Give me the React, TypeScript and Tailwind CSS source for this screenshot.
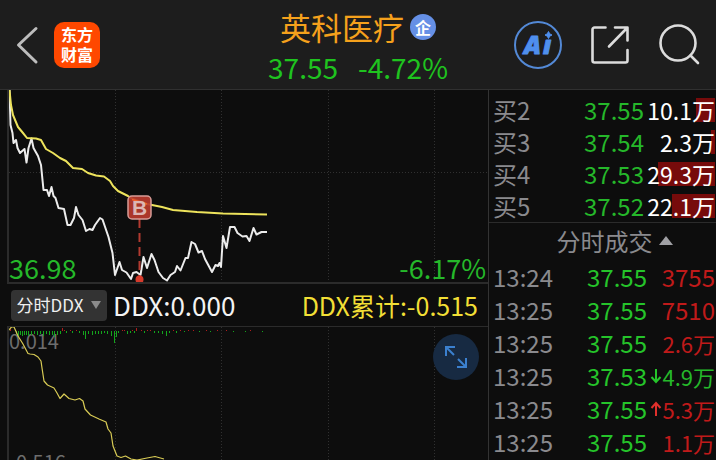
import React from "react";

interface Bid {
  label: string;
  price: string;
  volume: string;
  depth: number;
}

interface Trade {
  time: string;
  price: string;
  volume: string;
  side: "buy" | "sell";
  arrow?: "up" | "down";
}

const BIDS: Bid[] = [
  { label: "买2", price: "37.55", volume: "10.1万", depth: 19 },
  { label: "买3", price: "37.54", volume: "2.3万", depth: 4 },
  { label: "买4", price: "37.53", volume: "29.3万", depth: 57 },
  { label: "买5", price: "37.52", volume: "22.1万", depth: 43 },
];

const TRADES: Trade[] = [
  { time: "13:24", price: "37.55", volume: "3755", side: "buy" },
  { time: "13:25", price: "37.55", volume: "7510", side: "buy" },
  { time: "13:25", price: "37.55", volume: "2.6万", side: "buy" },
  { time: "13:25", price: "37.53", volume: "4.9万", side: "sell", arrow: "down" },
  { time: "13:25", price: "37.55", volume: "5.3万", side: "buy", arrow: "up" },
  { time: "13:25", price: "37.55", volume: "1.1万", side: "buy" },
];

const PRICE_LINE =
  "9.5,90 10.5,125 12.5,133 13.5,143 16,140 17.5,148 20,153 24.5,149 26.5,162.5 28.5,148 31.5,138.5 33.5,148 38,156 41,165 43.5,190 47,190 49,196 51.5,187 53.5,196 55.5,198 58.5,208 64,209 67.5,225 70.5,225 74,218 76,207 78.5,215 82.5,220 86,231 89.5,229 92.5,230 95,225 100,218 102.5,219.5 108.5,237 112.5,253 115,275 119.5,262 122,270 126.5,272.5 131,279 133,273 136.5,272 140.5,275 143.5,257 147,268 151.5,254 154.5,260 158.5,272 163,278 167,280.5 170.5,275 175,272 177,266 180.5,270.5 185.5,258 188,258 191.5,242 195,244 198.5,252.5 202,251 205,259 212,272 215.5,265 218,266 219.5,263 221,267 223,236 226.5,248 230,227 234.5,227 237.5,233 242.5,236.5 246.5,236 249.5,241 253.5,228 256.5,234.5 261.5,232 267,232";

const AVERAGE_LINE =
  "9.5,90 11,105 13,115 18,127 23,133 27,138 36,138.5 41,140 46,149 53,153 60,158 66,161 73,168 82,169 88,173 96,175.5 104,176.5 110,181 113,186 118,191 128,196 133,199 147,204 162,207 173,210 197,212 223,213.5 267,214.5";

const DDX_LINE =
  "8,331 11.5,327 14,327 18,336 23,344 28,353.5 30,354 34,354.5 38,357 41,361 42,368 44,381 47.5,385 54,388 57,393 60,398.5 64,394 69,398.5 75,400 79.5,398.5 83,401 85,409 90.5,415 99,419 106,422 108,429 111,433 113,446 117,456 121,457.5 125.5,456 131,459 137,460 147,458 155,456.5 164,459";

// [x, length] of each tick hanging below the zero axis
const DDX_DOWN = [
  [16, 3], [18, 5], [20, 4], [22, 5], [24, 4], [26, 4], [28, 5], [31, 4], [34, 3],
  [37, 4], [40, 3], [43, 5], [46, 3], [49, 4], [52, 4], [54, 6], [57, 4], [60, 3],
  [66, 2], [72, 2], [79, 2], [83, 4], [85, 8], [88, 3], [92, 4], [95, 3], [98, 3],
  [101, 3], [104, 2], [107, 3], [111, 5], [114, 12], [116, 6], [118, 2], [127, 3],
  [130, 2], [134, 2], [144, 2], [154, 2], [158, 2], [162, 3], [166, 5], [169, 2],
  [176, 2], [184, 1], [199, 1], [210, 1], [233, 1], [245, 1], [262, 1],
];

const DDX_UP = [
  [10, 2], [62, 3], [64, 1], [70, 1], [76, 1], [122, 1], [124, 1], [132, 1],
  [136, 3], [141, 1], [147, 1], [150, 1], [173, 1], [180, 1], [188, 1], [193, 1],
  [206, 1], [217, 1], [226, 1], [250, 1],
];

const GRID_X = [115, 221, 328, 434];

function Header() {
  return (
    <header className="grid h-[90px] shrink-0 grid-cols-[1fr_auto_1fr] items-center border-b border-[#303030] bg-[#1d1d1d]">
      <div className="flex items-center gap-3 pl-3">
        <button type="button" aria-label="返回">
          <svg width="30" height="40" viewBox="0 0 30 40" fill="none" stroke="#bdbdbd" strokeWidth="3" strokeLinecap="round" strokeLinejoin="round">
            <path d="M24 3.5 6.5 20 24 37" />
          </svg>
        </button>
        <a
          href="#home"
          className="flex size-[46px] flex-col items-center justify-center rounded-[10px] bg-[#ff4800] pb-px text-base leading-5 font-bold text-white"
        >
          <span>东方</span>
          <span>财富</span>
        </a>
      </div>

      <div className="flex flex-col items-center pt-1">
        <h1 className="flex items-center gap-1.5 text-[31px] leading-10 font-normal text-[#f5a11c]">
          英科医疗
          <span className="flex size-[26px] items-center justify-center rounded-full bg-[#6590e6] text-base leading-none font-bold text-white">
            企
          </span>
        </h1>
        <p className="flex gap-5 text-[28px] leading-10 text-[#1fc31f]">
          <span>37.55</span>
          <span>-4.72%</span>
        </p>
      </div>

      <div className="flex items-center justify-end gap-7 pr-4">
        <button type="button" aria-label="Ai">
          <svg width="48" height="48" viewBox="0 0 48 48" fill="#4f8fee">
            <circle cx="24" cy="24" r="23" fill="none" stroke="#5389d6" strokeWidth="2" />
            <text
              x="10 29"
              y="33"
              fontSize="25"
              fontWeight="800"
              fontStyle="italic"
              fontFamily="'Open Sans', sans-serif"
              stroke="#4f8fee"
              strokeLinejoin="round"
            >
              Aı
            </text>
            <path d="M34.500 10.500q.8 3 3.500 3.500-2.700.5-3.500 3.500-.8-3-3.500-3.500 2.700-.5 3.500-3.500Z" stroke="#4f8fee" />
          </svg>
        </button>
        <button type="button" aria-label="分享">
          <svg width="40" height="40" viewBox="0 0 40 40" fill="none" stroke="#dcdcdc" strokeWidth="2.6" strokeLinecap="round" strokeLinejoin="round">
            <path d="M15.500 2.500H4.500a2 2 0 0 0-2 2v31a2 2 0 0 0 2 2h31a2 2 0 0 0 2-2V25" />
            <path d="M25 2.500h12.500v13M37 3 19 21.500" />
          </svg>
        </button>
        <button type="button" aria-label="搜索">
          <svg width="42" height="42" viewBox="0 0 42 42" fill="none" stroke="#dcdcdc" strokeWidth="2.6" strokeLinecap="round">
            <circle cx="20" cy="19" r="17.5" />
            <path d="m32.500 31.500 7.500 7.500" />
          </svg>
        </button>
      </div>
    </header>
  );
}

function PriceChart() {
  return (
    <section className="relative h-[194px] border-b-2 border-l-2 border-[#2b2b2b]">
      <svg className="block size-full" viewBox="9 90 479 192" preserveAspectRatio="none" fill="none">
        <g stroke="#303030" strokeDasharray="1 2">
          {GRID_X.map((x) => (
            <path key={x} d={`M${x}.5 90V284`} />
          ))}
          <path d="M9 172.500H488" />
        </g>
        <polyline points={PRICE_LINE} stroke="#ececec" strokeWidth="2" strokeLinejoin="round" />
        <polyline points={AVERAGE_LINE} stroke="#ede35c" strokeWidth="2" strokeLinejoin="round" />
        {/* buy marker */}
        <path d="M139.500 219V276" stroke="#b23a30" strokeWidth="2" strokeDasharray="9 5" />
        <circle cx="139.5" cy="279.5" r="4" fill="#d63b2c" />
        <rect x="128" y="196" width="23" height="23" rx="4" fill="#b83a2d" fillOpacity="0.92" stroke="#d79c96" strokeWidth="1.5" />
        <path d="M132 199.500 147 204" stroke="#f2602b" strokeWidth="1.5" />
        <text x="139.5" y="215" textAnchor="middle" fontSize="21" fontWeight="700" fill="#dcb6b3" fontFamily="'Liberation Sans', sans-serif">
          B
        </text>
      </svg>
      <div className="absolute inset-x-0 bottom-0 flex justify-between pr-0.5 text-[27px] leading-7 text-[#25b82a]">
        <span>36.98</span>
        <span>-6.17%</span>
      </div>
    </section>
  );
}

function DdxBar() {
  return (
    <div className="flex h-[42px] items-center pr-2.5 pl-1 leading-8">
      <button
        type="button"
        className="mr-1.5 flex h-[31px] w-24 items-center justify-center gap-2 rounded bg-[#333333] text-[17px] leading-6 text-[#efefef]"
      >
        分时DDX
        <svg width="10" height="8" viewBox="0 0 10 8" fill="#8b8b8b">
          <path d="M0 0h10L5 8Z" />
        </svg>
      </button>
      <span className="text-[26px] text-[#f3f3f3]">DDX:0.000</span>
      <span className="ml-auto text-[25px] text-[#f2df35]">DDX累计:-0.515</span>
    </div>
  );
}

function DdxChart() {
  return (
    <section className="relative h-[150px] border-t border-l-2 border-[#2b2b2b]">
      <div className="absolute inset-0 flex flex-col justify-between text-xl leading-7 text-[#6d6d6d]">
        <span>0.014</span>
        <span>-0.516</span>
      </div>
      <svg className="relative block size-full" viewBox="9 327 479 149" preserveAspectRatio="none" fill="none">
        <g stroke="#303030" strokeDasharray="1 2">
          {GRID_X.map((x) => (
            <path key={x} d={`M${x}.5 327V476`} />
          ))}
        </g>
        <g stroke="#14a51c">
          {DDX_DOWN.map(([x, len]) => (
            <path key={x} d={`M${x}.5 331v${len}`} />
          ))}
        </g>
        <g stroke="#b01c1c">
          {DDX_UP.map(([x, len]) => (
            <path key={x} d={`M${x}.5 331v-${len}`} />
          ))}
        </g>
        <polyline points={DDX_LINE} stroke="#d8cb55" strokeWidth="1.2" strokeLinejoin="round" />
      </svg>
      <button
        type="button"
        aria-label="展开"
        className="absolute top-[7px] right-[9px] flex size-[46px] items-center justify-center rounded-full bg-[#172a42]"
      >
        <svg width="24" height="24" viewBox="0 0 24 24" fill="none" stroke="#3b80cf" strokeWidth="2">
          <path d="M11 2H2v9M2 2l8 8M22 13v9h-9M22 22l-8-8" />
        </svg>
      </button>
    </section>
  );
}

function TradeArrow({ direction }: { direction: "up" | "down" }) {
  return (
    <svg
      width="12"
      height="18"
      viewBox="0 0 12 18"
      fill="none"
      strokeWidth="2"
      className={direction === "up" ? "stroke-[#e0302c]" : "stroke-[#25c42a]"}
    >
      {direction === "up" ? (
        <path d="M6 16V3M1.500 8 6 3l4.500 5" />
      ) : (
        <path d="M6 2v13M1.500 10 6 15l4.500-5" />
      )}
    </svg>
  );
}

function OrderPanel() {
  return (
    <aside className="w-[228px] shrink-0 border-l border-[#333333] text-2xl leading-8">
      <table className="mt-1 w-full table-fixed border-collapse">
        <tbody>
          {BIDS.map((bid) => (
            <tr key={bid.label} className="h-8">
              <th scope="row" className="w-16 p-0 pl-1 text-left font-normal text-[#8a8a8e]">
                {bid.label}
              </th>
              <td className="p-0 text-right text-[#25b82a]">{bid.price}</td>
              <td className="relative w-[72px] p-0 pr-px text-right text-[23px] text-white">
                <span
                  className="absolute top-1 right-px h-6 bg-[#770b0b]"
                  style={{ width: bid.depth }}
                />
                <span className="relative">{bid.volume}</span>
              </td>
            </tr>
          ))}
        </tbody>
      </table>

      <button
        type="button"
        className="flex h-[38px] w-full items-center justify-center gap-1.5 border-t border-[#2b2b2b] pb-0.5 pl-6 text-[#8a8a8e]"
      >
        分时成交
        <svg width="14" height="9" viewBox="0 0 14 9" fill="#a0a0a4">
          <path d="M7 0 14 9H0Z" />
        </svg>
      </button>

      <table className="w-full table-fixed border-collapse">
        <tbody>
          {TRADES.map((trade, i) => (
            <tr key={i} className="h-[33px]">
              <td className="w-20 p-0 pl-1 text-[#8a8a8e]">{trade.time}</td>
              <td className="p-0 text-right text-[#25c42a]">{trade.price}</td>
              <td className={`w-[69px] p-0 pr-px ${trade.side === "buy" ? "text-[#c01a1a]" : "text-[#25b82a]"}`}>
                <div className="flex items-center justify-end">
                  {trade.arrow && <TradeArrow direction={trade.arrow} />}
                  <span className={trade.volume.endsWith("万") ? "text-[22px]" : ""}>
                    {trade.volume}
                  </span>
                </div>
              </td>
            </tr>
          ))}
        </tbody>
      </table>
    </aside>
  );
}

export default function App() {
  return (
    <div className="flex h-screen flex-col overflow-hidden bg-[#0d0d0d] font-['Noto_Sans_CJK_SC',sans-serif]">
      <Header />
      <main className="flex min-h-0 flex-1">
        <div className="min-w-0 flex-1 pl-[7px]">
          <PriceChart />
          <DdxBar />
          <DdxChart />
        </div>
        <OrderPanel />
      </main>
    </div>
  );
}
